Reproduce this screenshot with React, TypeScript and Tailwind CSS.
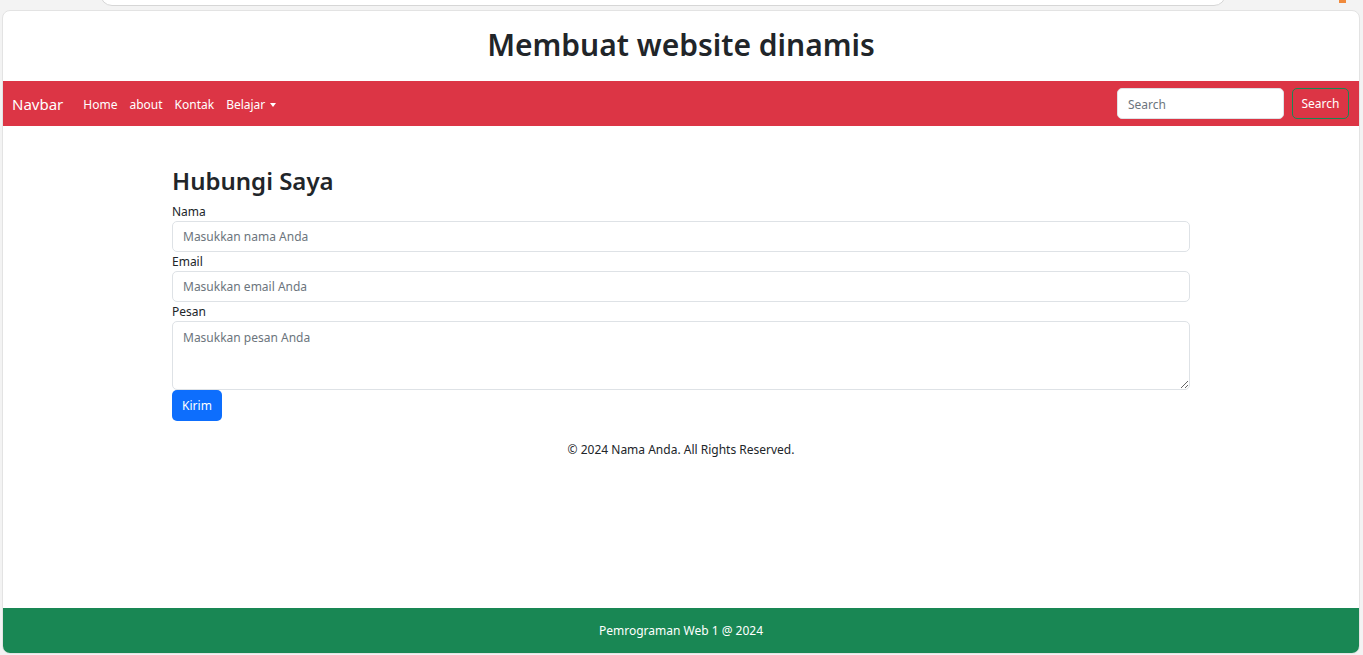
import React from 'react';

const font = { fontFamily: '"Noto Sans", "Open Sans", Arial, sans-serif' };

function NavLinks() {
  return (
    <ul className="flex items-center gap-[12px] text-[12px] text-white">
      <li><a className="cursor-pointer">Home</a></li>
      <li><a className="cursor-pointer">about</a></li>
      <li><a className="cursor-pointer">Kontak</a></li>
      <li className="flex items-center gap-[5px]">
        <a className="cursor-pointer">Belajar</a>
        <span className="mt-[1px] h-0 w-0 border-x-[3.5px] border-t-[4px] border-x-transparent border-t-white" />
      </li>
    </ul>
  );
}

function Field({ label, placeholder }: { label: string; placeholder: string }) {
  return (
    <div className="flex flex-col">
      <label className="pt-[1px] text-[12px] leading-[18px] text-[#212529]">{label}</label>
      <input
        placeholder={placeholder}
        className="h-[31px] rounded-[5px] border border-[#dee2e6] px-[10px] text-[12px] text-[#212529] outline-none placeholder:text-[#6c757d]"
      />
    </div>
  );
}

export default function App() {
  return (
    <div className="flex h-screen flex-col bg-[#f3f3f3]" style={font}>
      {/* sisa address bar browser */}
      <div className="relative h-[10px] shrink-0">
        <div className="absolute left-[100px] top-[-10px] h-[16px] w-[1126px] rounded-b-[12px] border border-[#d6d6d6] bg-white" />
        <div className="absolute left-[1339px] top-0 h-[3px] w-[7px] bg-[#f08a3c]" />
      </div>

      <div className="ml-[2px] mr-[3px] mb-[1px] flex flex-1 flex-col overflow-hidden rounded-[8px] border border-[#e3e3e3] bg-white">
        <header className="flex h-[70px] shrink-0 items-center justify-center pb-[4px]">
          <h1 className="text-[30px] font-semibold text-[#212529]">Membuat website dinamis</h1>
        </header>

        <nav className="flex h-[45px] shrink-0 items-center bg-[#dc3545] pl-[9px] pr-[10px]">
          <span className="mr-[20px] pt-[1px] text-[15px] text-white">Navbar</span>
          <div className="pt-[2px]">
            <NavLinks />
          </div>
          <form className="ml-auto flex items-center gap-[8px]">
            <input
              placeholder="Search"
              className="h-[31px] w-[167px] rounded-[5px] border border-[#dee2e6] bg-white px-[10px] pt-[1px] text-[12px] outline-none placeholder:text-[#6c757d]"
            />
            <button
              type="button"
              className="h-[31px] w-[57px] rounded-[5px] border border-[#198754] pt-[1px] text-[12px] text-white"
            >
              Search
            </button>
          </form>
        </nav>

        <main className="flex-1">
          <div className="ml-[169px] w-[1018px] pt-[40px]">
            <h2 className="mb-[6px] text-[24px] font-semibold leading-[30px] text-[#212529]">Hubungi Saya</h2>
            <form className="flex flex-col">
              <Field label="Nama" placeholder="Masukkan nama Anda" />
              <Field label="Email" placeholder="Masukkan email Anda" />
              <div className="flex flex-col">
                <label className="pt-[1px] text-[12px] leading-[18px] text-[#212529]">Pesan</label>
                <textarea
                  placeholder="Masukkan pesan Anda"
                  className="h-[69px] rounded-[5px] border border-[#dee2e6] px-[10px] py-[7px] text-[12px] outline-none placeholder:text-[#6c757d]"
                />
              </div>
              <div>
                <button
                  type="button"
                  className="h-[31px] w-[50px] rounded-[5px] bg-[#0d6efd] pt-[1px] text-[12px] text-white"
                >
                  Kirim
                </button>
              </div>
            </form>
            <p className="mt-[20px] text-center text-[12px] text-[#212529]">© 2024 Nama Anda. All Rights Reserved.</p>
          </div>
        </main>

        <footer className="flex h-[45px] shrink-0 items-center justify-center bg-[#198754] pt-[1px] text-[12px] text-white">
          Pemrograman Web 1 @ 2024
        </footer>
      </div>
    </div>
  );
}
